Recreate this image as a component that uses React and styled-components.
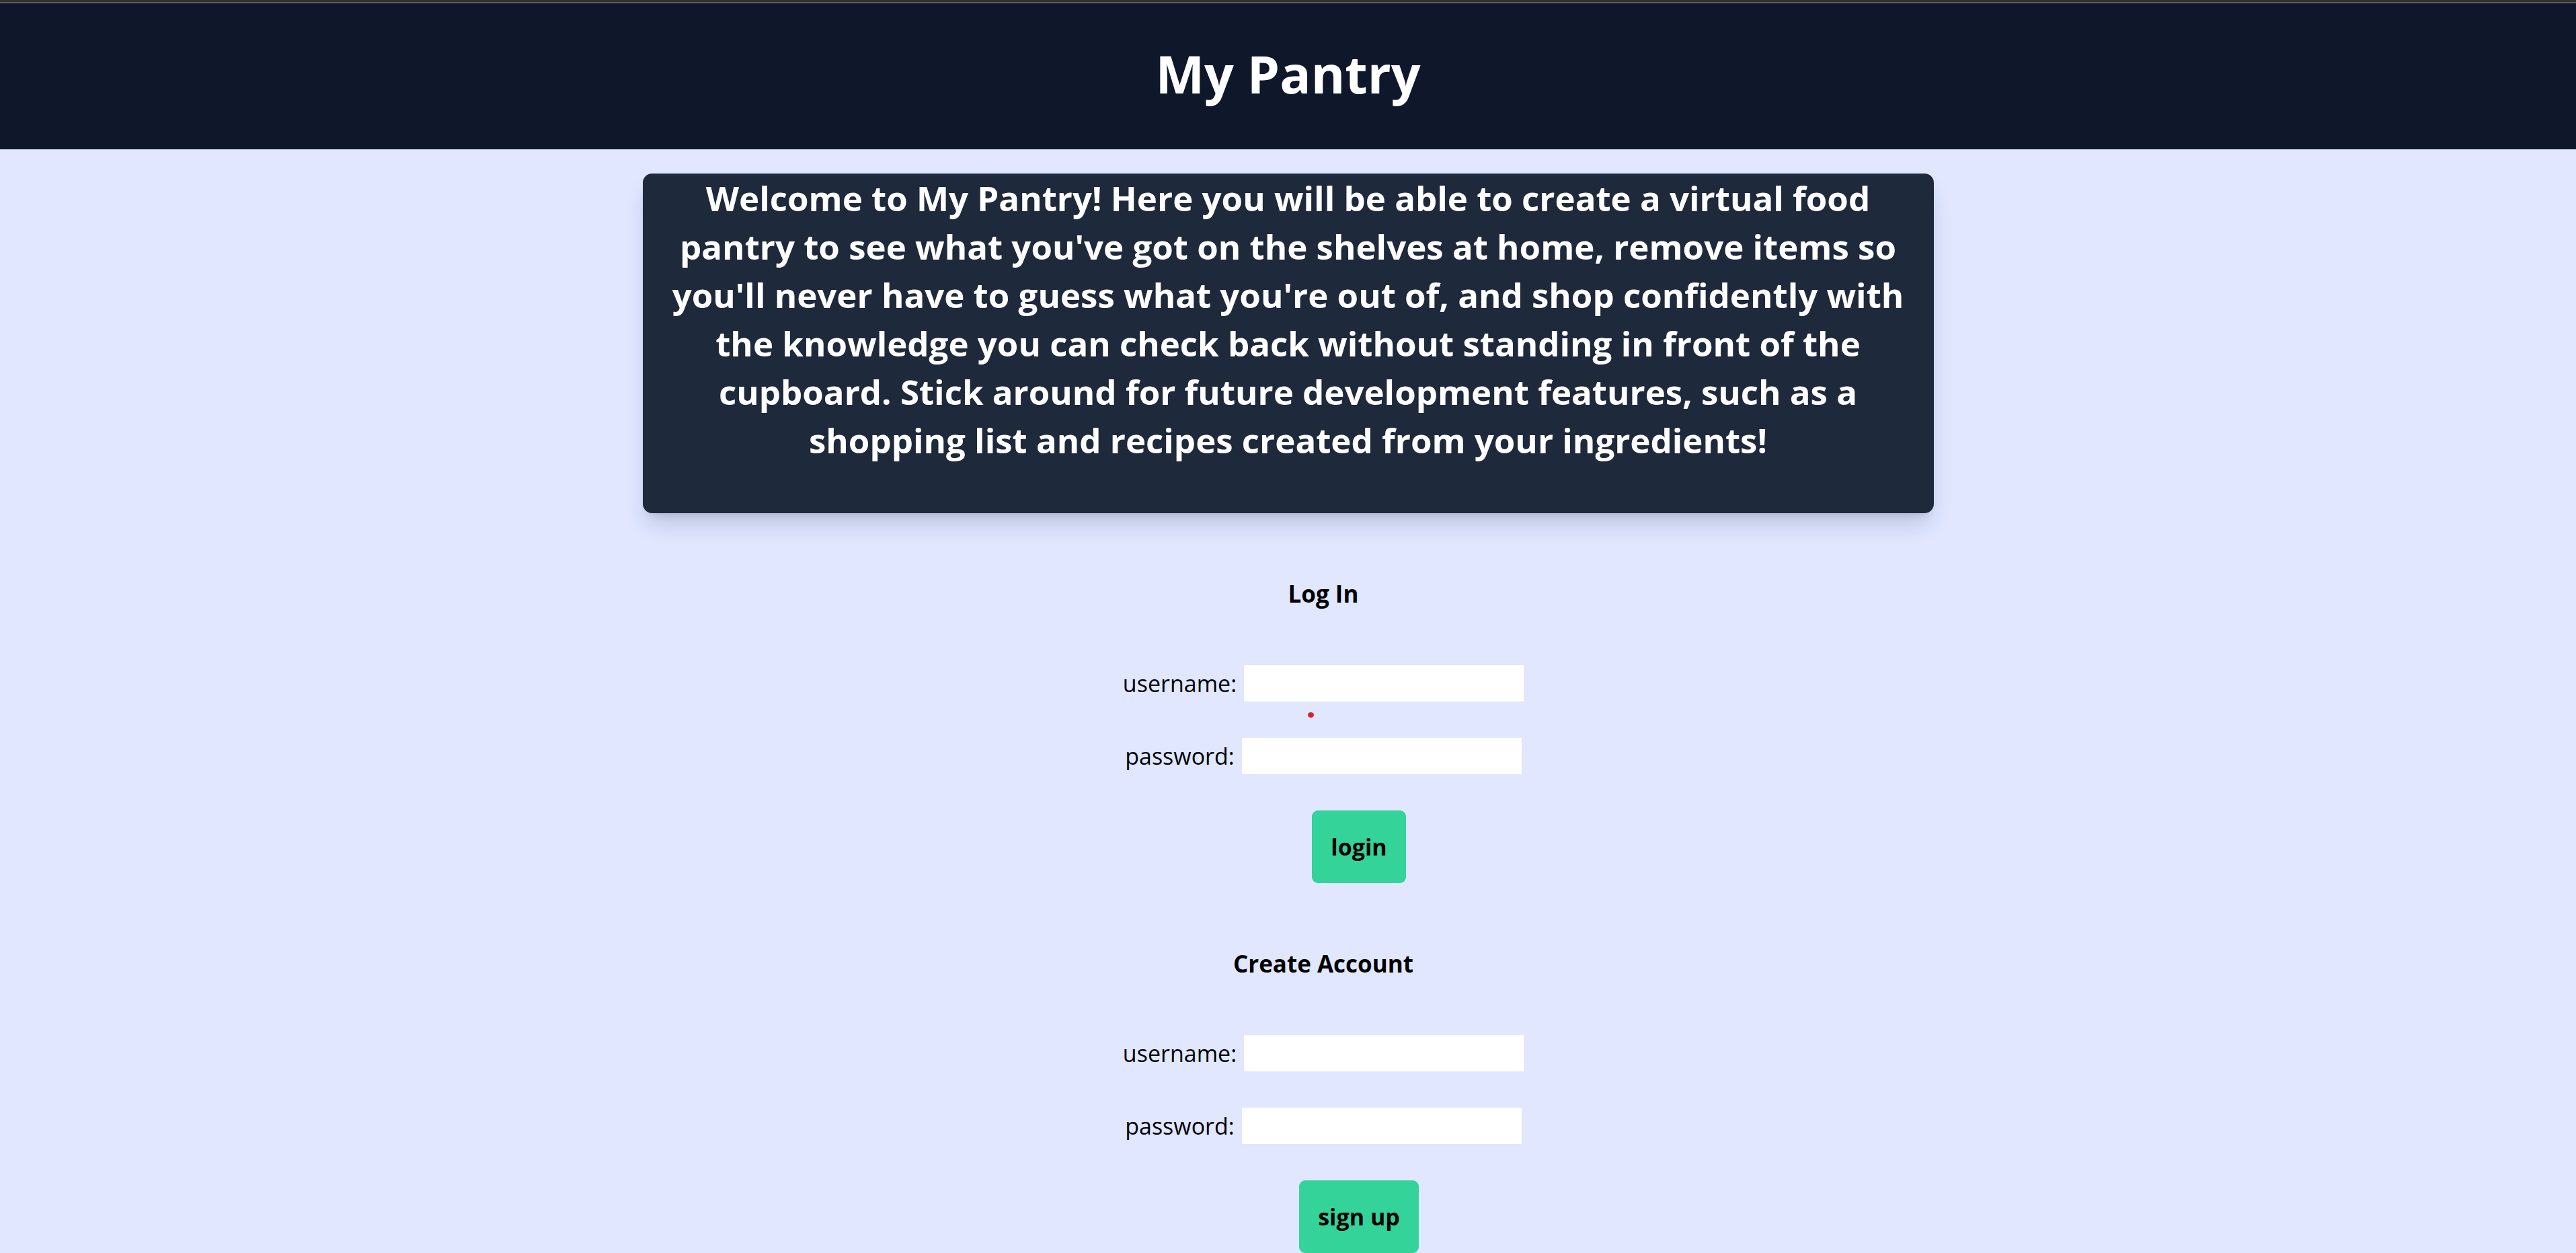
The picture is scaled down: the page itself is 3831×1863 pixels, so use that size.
import React from 'react'
import styled, { createGlobalStyle } from 'styled-components'

const GlobalStyle = createGlobalStyle`
  html, body {
    margin: 0;
    padding: 0;
    background: #e0e7ff;
    font-family: 'Open Sans', 'Noto Sans', sans-serif;
    color: #000;
  }
`

const TopStrip = styled.div`
  height: 3px;
  background: #303030;
  border-bottom: 2px solid #5c5c5c;
`

const Header = styled.header`
  height: 217px;
  background: #0f172a;
  display: flex;
  align-items: center;
  justify-content: center;
`

const Title = styled.h1`
  margin: 0 0 8px;
  color: #fff;
  font-size: 77px;
  font-weight: 700;
  line-height: 108px;
`

const Main = styled.main`
  display: flex;
  flex-direction: column;
  align-items: center;
  padding-top: 36px;
`

const Card = styled.section`
  width: 1920px;
  box-sizing: border-box;
  background: #1e293b;
  border-radius: 14px;
  padding: 0 40px 73px;
  box-shadow: 0 22px 34px -7px rgba(30, 41, 80, 0.18), 0 9px 13px -9px rgba(30, 41, 80, 0.18);
`

const Intro = styled.h2`
  margin: 0;
  color: #fff;
  text-align: center;
  font-size: 51px;
  font-weight: 700;
  line-height: 72px;
  white-space: nowrap;
`

const Forms = styled.div`
  display: flex;
  flex-direction: column;
  align-items: center;
  padding-left: 105px;
`

const FormBlock = styled.form`
  display: flex;
  flex-direction: column;
  align-items: center;
  margin-top: 96px;
`

const FormTitle = styled.h3`
  margin: 0 0 82px;
  font-size: 35px;
  font-weight: 700;
  line-height: 48px;
`

const Row = styled.div`
  position: relative;
  display: flex;
  align-items: center;
  gap: 11px;
  margin-bottom: 54px;
`

const Label = styled.label`
  font-size: 34px;
  line-height: 48px;
`

const Input = styled.input`
  width: 416px;
  height: 54px;
  box-sizing: border-box;
  border: none;
  background: #fff;
  padding: 0 4px;
  font: inherit;
  font-size: 34px;
  outline: none;
`

const Dot = styled.span`
  position: absolute;
  left: calc(50% - 22.5px);
  top: calc(100% + 16px);
  width: 9px;
  height: 8px;
  border-radius: 50%;
  background: #e11d26;
`

const Button = styled.button`
  margin-left: 106px;
  padding: 30px 28px;
  border: none;
  border-radius: 9px;
  background: #34d399;
  color: #000;
  font-family: inherit;
  font-size: 34px;
  font-weight: 700;
  line-height: 48px;
  cursor: pointer;
`

const introLines = [
  'Welcome to My Pantry! Here you will be able to create a virtual food',
  "pantry to see what you've got on the shelves at home, remove items so",
  "you'll never have to guess what you're out of, and shop confidently with",
  'the knowledge you can check back without standing in front of the',
  'cupboard. Stick around for future development features, such as a',
  'shopping list and recipes created from your ingredients!',
]

const AuthForm = ({ title, action, showDot }) => (
  <FormBlock onSubmit={e => e.preventDefault()}>
    <FormTitle>{title}</FormTitle>
    <Row>
      <Label>username:</Label>
      <Input type="text" />
      {showDot && <Dot />}
    </Row>
    <Row>
      <Label>password:</Label>
      <Input type="password" />
    </Row>
    <Button type="submit">{action}</Button>
  </FormBlock>
)

export default function App() {
  return (
    <>
      <GlobalStyle />
      <TopStrip />
      <Header>
        <Title>My Pantry</Title>
      </Header>
      <Main>
        <Card>
          <Intro>
            {introLines.map((line, i) => (
              <React.Fragment key={i}>
                {line}
                {i < introLines.length - 1 && <br />}
              </React.Fragment>
            ))}
          </Intro>
        </Card>
        <Forms>
          <AuthForm title="Log In" action="login" showDot />
          <AuthForm title="Create Account" action="sign up" />
        </Forms>
      </Main>
    </>
  )
}
